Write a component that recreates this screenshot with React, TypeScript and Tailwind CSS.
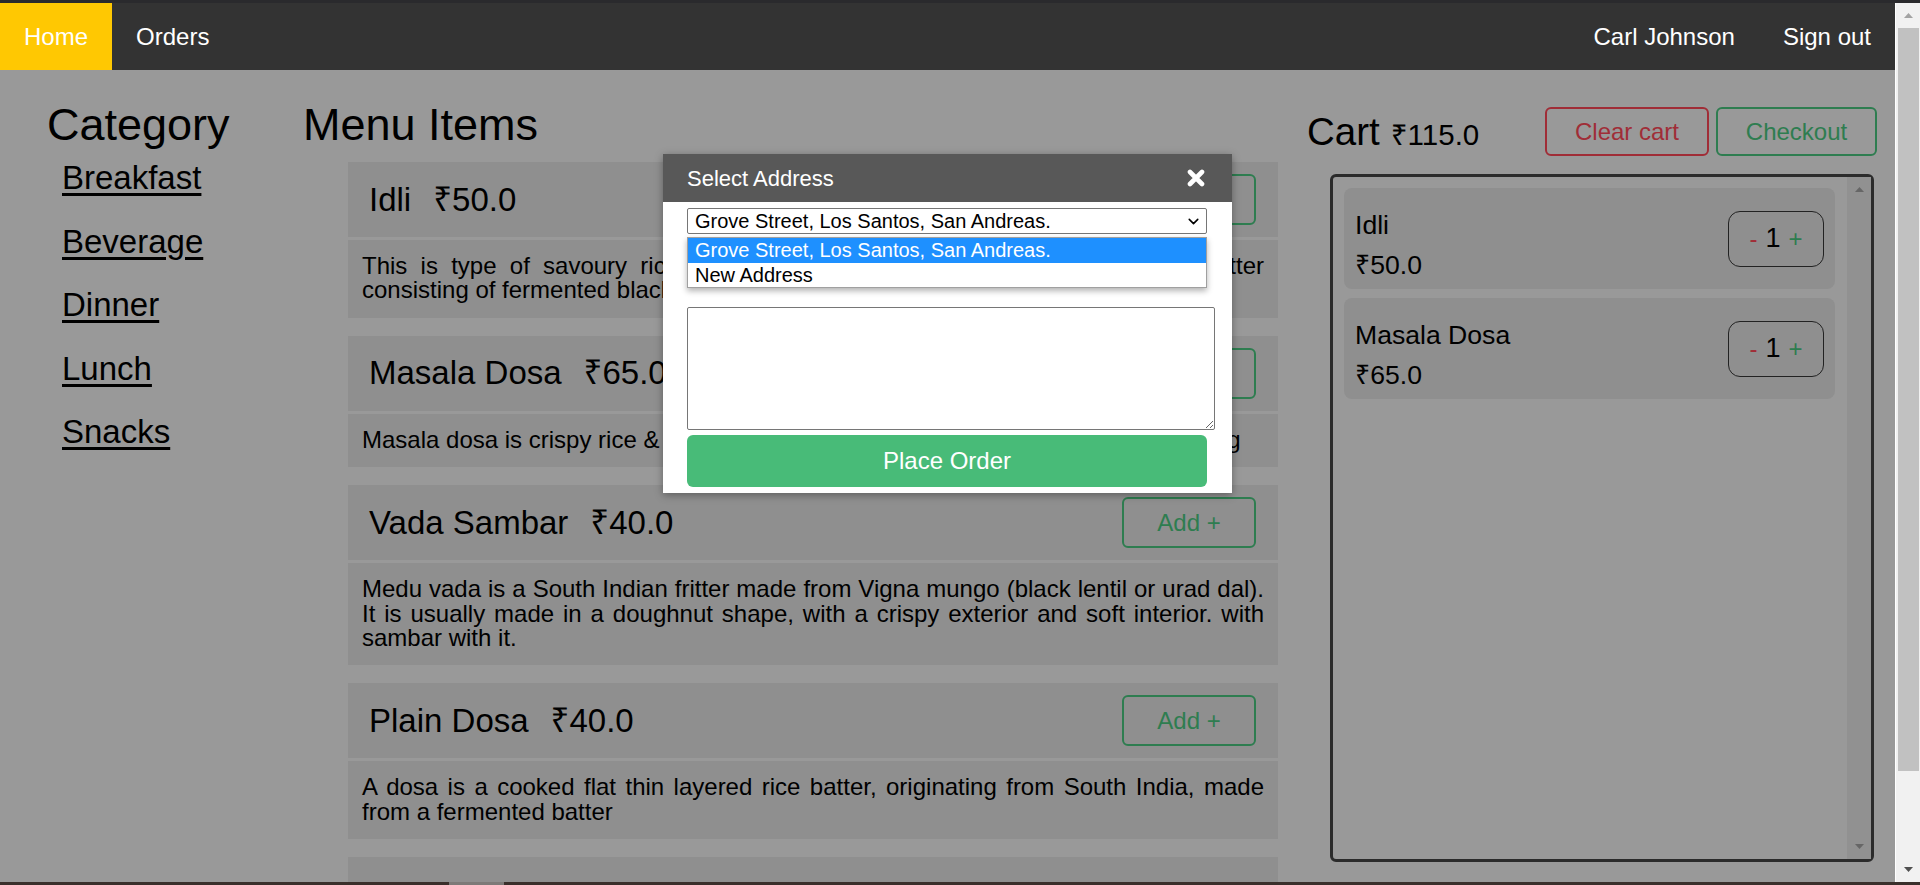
import { ChevronDown } from "lucide-react"

const menuItems = [
  {
    name: "Idli",
    price: "₹50.0",
    desc: "This is type of savoury rice cake, prepared by steaming a smooth thick batter consisting of fermented black lentils and rice.",
  },
  {
    name: "Masala Dosa",
    price: "₹65.0",
    desc: "Masala dosa is crispy rice & lentil pancake stuffed with a spicy potato masala filling",
  },
  {
    name: "Vada Sambar",
    price: "₹40.0",
    desc: "Medu vada is a South Indian fritter made from Vigna mungo (black lentil or urad dal). It is usually made in a doughnut shape, with a crispy exterior and soft interior. with sambar with it.",
  },
  {
    name: "Plain Dosa",
    price: "₹40.0",
    desc: "A dosa is a cooked flat thin layered rice batter, originating from South India, made from a fermented batter",
  },
]

const categories = ["Breakfast", "Beverage", "Dinner", "Lunch", "Snacks"]

const cartItems = [
  { name: "Idli", price: "₹50.0", qty: 1 },
  { name: "Masala Dosa", price: "₹65.0", qty: 1 },
]

function Triangle({ up, color }: { up?: boolean; color: string }) {
  return (
    <svg width="9" height="5" viewBox="0 0 9 5">
      <polygon points={up ? "0,5 9,5 4.5,0" : "0,0 9,0 4.5,5"} fill={color} />
    </svg>
  )
}

function MenuRow({ name, price, desc }: { name: string; price: string; desc: string }) {
  return (
    <div className="mb-[18px] flex flex-col gap-[3px]">
      <div className="flex h-[75px] items-center justify-between bg-[#8f8f8f] pl-[21px] pr-[22px]">
        <div className="text-[33px] leading-[38px]">
          {name}
          <span className="ml-[22px]">{price}</span>
        </div>
        <button className="flex h-[51px] w-[134px] items-center justify-center rounded-[6px] border-2 border-[#2e7d50] text-[24px] text-[#2e7d50]">
          Add +
        </button>
      </div>
      <p className="bg-[#8f8f8f] px-[14px] pb-[15px] pt-[14px] text-justify text-[24px] leading-[24.4px]">{desc}</p>
    </div>
  )
}

function CartItem({ name, price, qty }: { name: string; price: string; qty: number }) {
  return (
    <div className="flex h-[101px] items-center justify-between rounded-[8px] bg-[#8f8f8f] pl-[11px] pr-[11px]">
      <div className="flex flex-col pb-[8px] pt-[21px] text-[26.6px]">
        <span className="leading-[32px]">{name}</span>
        <span className="mt-[8px] leading-[32px]">{price}</span>
      </div>
      <div className="flex h-[56px] w-[96px] items-center justify-center gap-[8px] rounded-[12px] border border-[#222]">
        <span className="text-[24px] text-[#a02d37]">-</span>
        <span className="text-[27px]">{qty}</span>
        <span className="text-[24px] text-[#2e7d50]">+</span>
      </div>
    </div>
  )
}

function AddressModal() {
  return (
    <div className="absolute left-[663px] top-[151px] flex w-[569px] flex-col bg-white pb-[6px] shadow-[0_2px_8px_rgba(0,0,0,0.35)]">
      <div className="flex h-[48px] items-center justify-between bg-[#585858] pl-[24px] pr-[27px] text-[22px] text-white">
        <span>Select Address</span>
        <svg width="18" height="18" viewBox="0 0 18 18">
          <path d="M3 3 L15 15 M15 3 L3 15" stroke="white" strokeWidth="4.6" strokeLinecap="round" />
        </svg>
      </div>
      <div className="relative flex flex-col px-[24px] pt-[6px]">
        <div className="relative h-[26px] w-[520px]">
          <select
            defaultValue="grove"
            className="h-full w-full appearance-none rounded-[2px] border border-[#767676] bg-white pl-[7px] text-[20px] leading-[24px] text-black"
          >
            <option value="grove">Grove Street, Los Santos, San Andreas.</option>
            <option value="new">New Address</option>
          </select>
          <ChevronDown className="pointer-events-none absolute right-[5px] top-[5px] h-[17px] w-[17px]" strokeWidth={2.2} />
        </div>
        <textarea className="mt-[73px] h-[123px] w-[528px] rounded-[2px] border border-[#767676] bg-white" />
        <button className="mt-[5px] h-[52px] w-[520px] rounded-[6px] bg-[#48bb78] text-[24px] text-white">Place Order</button>

        {/* open native dropdown list */}
        <div className="absolute left-[24px] top-[35px] w-[520px] border border-[#a0a0a0] bg-white text-[20px] shadow-[0_3px_6px_rgba(0,0,0,0.3)]">
          <div className="h-[25px] bg-[#1e90ff] pl-[7px] leading-[25px] text-white">Grove Street, Los Santos, San Andreas.</div>
          <div className="h-[24px] pl-[7px] leading-[24px] text-black">New Address</div>
        </div>
      </div>
    </div>
  )
}

export default function App() {
  return (
    <div className="flex h-[885px] w-[1920px] flex-col overflow-hidden bg-[#2a2a2d] font-['Liberation_Sans','Noto_Sans',sans-serif] text-black">
      <div className="h-[3px] shrink-0" />
      <div className="flex min-h-0 flex-1">
        <div className="relative flex min-w-0 flex-1 flex-col bg-[#999]">
          <nav className="flex h-[67px] shrink-0 items-stretch justify-between bg-[#333] text-[24px] text-white">
            <div className="flex">
              <a className="flex items-center bg-[#ffc802] px-6">Home</a>
              <a className="flex items-center px-6">Orders</a>
            </div>
            <div className="flex">
              <a className="flex items-center px-6">Carl Johnson</a>
              <a className="flex items-center px-6">Sign out</a>
            </div>
          </nav>

          <div className="flex min-h-0 flex-1 overflow-hidden pl-[47px]">
            <div className="w-[255px] shrink-0 pt-[30px]">
              <h1 className="text-[45px] leading-[50px]">Category</h1>
              <ul className="mt-[9px] flex flex-col gap-[26px] pl-[15px]">
                {categories.map((c) => (
                  <li key={c}>
                    <a className="text-[33px] leading-[37.5px] underline underline-offset-[4px]">{c}</a>
                  </li>
                ))}
              </ul>
            </div>

            <div className="w-[976px] shrink-0 pt-[30px]">
              <h1 className="pl-[1px] text-[45px] leading-[50px]">Menu Items</h1>
              <div className="ml-[46px] mt-[12px] w-[930px]">
                {menuItems.map((m) => (
                  <MenuRow key={m.name} {...m} />
                ))}
                <div className="h-[75px] bg-[#8f8f8f]" />
              </div>
            </div>

            <div className="ml-[29px] w-[570px] shrink-0 pt-[37px]">
              <div className="flex h-[49px] items-center justify-between">
                <div className="flex items-baseline">
                  <span className="text-[38.5px]">Cart</span>
                  <span className="ml-[11px] text-[29.5px]">₹115.0</span>
                </div>
                <div className="flex gap-[7px]">
                  <button className="h-[49px] w-[164px] rounded-[6px] border-2 border-[#a02d37] text-[24px] text-[#a02d37]">
                    Clear cart
                  </button>
                  <button className="h-[49px] w-[161px] rounded-[6px] border-2 border-[#2e7d50] text-[24px] text-[#2e7d50]">
                    Checkout
                  </button>
                </div>
              </div>
              <div className="ml-[23px] mt-[18px] flex h-[688px] w-[544px] rounded-[6px] border-[3px] border-[#2b2b2b]">
                <div className="flex flex-1 flex-col gap-[9px] pl-[11px] pr-[12px] pt-[11px]">
                  {cartItems.map((c) => (
                    <CartItem key={c.name} {...c} />
                  ))}
                </div>
                <div className="flex w-[24px] flex-col items-center justify-between bg-[#919191] py-[10px]">
                  <Triangle up color="#666" />
                  <Triangle color="#666" />
                </div>
              </div>
            </div>
          </div>

          <AddressModal />
        </div>

        <div className="flex w-[25px] shrink-0 flex-col items-center border-l border-white bg-[#f1f1f1]">
          <div className="flex h-[25px] items-center justify-center">
            <Triangle up color="#a3a3a3" />
          </div>
          <div className="h-[743px] w-[21px] bg-[#c1c1c1]" />
          <div className="flex-1" />
          <div className="flex h-[25px] items-center justify-center">
            <Triangle color="#505050" />
          </div>
        </div>
      </div>
      <div className="flex h-[3px] shrink-0 bg-[#3a2f2b]">
        <div className="ml-[449px] w-[55px] bg-[#7d7a78]" />
      </div>
    </div>
  )
}
